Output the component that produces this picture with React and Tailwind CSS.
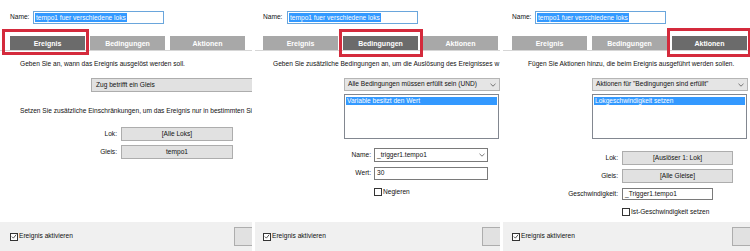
import React from "react";

// three cropped dialog windows side by side, each with its red tab highlight

function Check({ checked }) {
  return (
    <span className="w-[8px] h-[8px] border border-[#333] bg-white flex items-center justify-center shrink-0">
      {checked && (
        <svg width="7" height="7" viewBox="0 0 7 7">
          <path d="M1 3.6 L2.8 5.4 L6 1.4" fill="none" stroke="#222" strokeWidth="0.9" />
        </svg>
      )}
    </span>
  );
}

function Chevron() {
  return (
    <svg width="6" height="4" viewBox="0 0 6 4" className="shrink-0">
      <path d="M0.5 0.8 L3 3.2 L5.5 0.8" fill="none" stroke="#555" strokeWidth="0.8" />
    </svg>
  );
}

function NameRow({ pad, labelW }) {
  return (
    <div className={`flex items-center ${pad}`}>
      <span className={`${labelW}`}>Name:</span>
      <div className="w-[131px] h-[13px] border border-[#6aa6dc] bg-white flex items-center px-[1px]">
        <span className="bg-[#3399ff] text-white leading-[9px] px-[1px] whitespace-nowrap">tempo1 fuer verschiedene loks</span>
      </div>
    </div>
  );
}

function Tabs({ pad, active, box }) {
  const labels = ["Ereignis", "Bedingungen", "Aktionen"];
  return (
    <div className={`mt-[12px] flex gap-[5px] border-b border-[#d6d6d6] ${pad}`}>
      {labels.map((l, i) => (
        <div
          key={l}
          className={`relative w-[75px] h-[14px] shrink-0 flex items-center justify-center text-white font-bold text-[7px] ${
            i === active ? "bg-[#6b6b6b]" : "bg-[#a8a8a8]"
          }`}
        >
          {l}
          {i === active && <span className={`absolute border-[3px] border-[#d42a3c] ${box}`} />}
        </div>
      ))}
    </div>
  );
}

function Btn({ children, className }) {
  return (
    <div className={`h-[14px] bg-[#e1e1e1] border border-[#adadad] flex items-center whitespace-nowrap ${className}`}>{children}</div>
  );
}

function BottomBar({ pad }) {
  return (
    <div className={`h-[29px] bg-[#f0f0f0] flex items-center justify-between ${pad}`}>
      <div className="flex items-center gap-[1px]">
        <Check checked />
        <span>Ereignis aktivieren</span>
      </div>
      <div className="w-[22px] h-[19px] bg-[#e1e1e1] border border-[#adadad] -mr-[4px]" />
    </div>
  );
}

function Listbox({ item, className }) {
  return (
    <div className={`w-[155px] h-[45px] border border-[#828790] bg-white pt-[2px] px-[1px] ${className}`}>
      <div className="bg-[#3399ff] text-white leading-[8px] px-[1px]">{item}</div>
    </div>
  );
}

function Select({ children, className }) {
  return (
    <div className={`h-[13px] w-[156px] bg-[#e5e5e5] border border-[#b5b5b5] flex items-center justify-between px-[3px] ${className}`}>
      <span className="whitespace-nowrap">{children}</span>
      <Chevron />
    </div>
  );
}

function PanelEreignis() {
  return (
    <div className="w-[252px] h-[251px] flex flex-col overflow-hidden shrink-0">
      <div className="flex-1 flex flex-col pt-[11px]">
        <NameRow pad="pl-[10px]" labelW="w-[23px]" />
        <Tabs pad="pl-[10px]" active={0} box="-left-[8px] -right-[4px] -top-[7px] -bottom-[5px]" />
        <p className="mt-[8px] pl-[20px] leading-[9px] whitespace-nowrap overflow-hidden">
          Geben Sie an, wann das Ereignis ausgelöst werden soll.
        </p>
        <Btn className="mt-[10px] ml-[91px] w-[161px] h-[13px] px-[4px] border-r-0">Zug betrifft ein Gleis</Btn>
        <p className="mt-[14px] pl-[20px] leading-[9px] whitespace-nowrap overflow-hidden">
          Setzen Sie zusätzliche Einschränkungen, um das Ereignis nur in bestimmten Si
        </p>
        <div className="mt-[12px] flex items-center">
          <span className="w-[117px] text-right">Lok:</span>
          <Btn className="ml-[4px] w-[112px] justify-center">[Alle Loks]</Btn>
        </div>
        <div className="mt-[4px] flex items-center">
          <span className="w-[117px] text-right">Gleis:</span>
          <Btn className="ml-[4px] w-[112px] justify-center">tempo1</Btn>
        </div>
      </div>
      <BottomBar pad="pl-[10px]" />
    </div>
  );
}

function PanelBedingungen() {
  return (
    <div className="w-[245px] h-[251px] flex flex-col overflow-hidden shrink-0">
      <div className="flex-1 flex flex-col pt-[11px]">
        <NameRow pad="pl-[8px]" labelW="w-[24px]" />
        <Tabs pad="pl-[8px]" active={1} box="-left-[4px] -right-[5px] -top-[7px] -bottom-[7px]" />
        <p className="mt-[8px] pl-[18px] leading-[9px] whitespace-nowrap overflow-hidden">
          Geben Sie zusätzliche Bedingungen an, um die Auslösung des Ereignisses w
        </p>
        <Select className="mt-[10px] ml-[89px]">Alle Bedingungen müssen erfüllt sein (UND)</Select>
        <Listbox className="mt-[3px] ml-[89px]" item="Variable besitzt den Wert" />
        <div className="mt-[9px] flex items-center">
          <span className="w-[116px] text-right">Name:</span>
          <div className="ml-[3px] w-[114px] h-[14px] bg-white border border-[#7a7a7a] flex items-center justify-between px-[2px]">
            <span>_trigger1.tempo1</span>
            <Chevron />
          </div>
        </div>
        <div className="mt-[5px] flex items-center">
          <span className="w-[116px] text-right">Wert:</span>
          <div className="ml-[3px] w-[114px] h-[13px] bg-white border border-[#7a7a7a] flex items-center px-[2px]">30</div>
        </div>
        <div className="mt-[8px] ml-[119px] flex items-center gap-[1px]">
          <Check />
          <span>Negieren</span>
        </div>
      </div>
      <BottomBar pad="pl-[8px]" />
    </div>
  );
}

function PanelAktionen() {
  return (
    <div className="w-[247px] h-[251px] flex flex-col overflow-hidden shrink-0">
      <div className="flex-1 flex flex-col pt-[11px]">
        <NameRow pad="pl-[9px]" labelW="w-[23px]" />
        <Tabs pad="pl-[9px]" active={2} box="-left-[5px] -right-[4px] -top-[8px] -bottom-[7px]" />
        <p className="mt-[8px] pl-[25px] leading-[9px] whitespace-nowrap overflow-hidden">
          Fügen Sie Aktionen hinzu, die beim Ereignis ausgeführt werden sollen.
        </p>
        <Select className="mt-[10px] ml-[89px]">Aktionen für "Bedingungen sind erfüllt"</Select>
        <Listbox className="mt-[3px] ml-[89px]" item="Lokgeschwindigkeit setzen" />
        <div className="mt-[12px] flex items-center">
          <span className="w-[115px] text-right">Lok:</span>
          <Btn className="ml-[4px] w-[111px] h-[13px] justify-center">[Auslöser 1: Lok]</Btn>
        </div>
        <div className="mt-[4px] flex items-center">
          <span className="w-[115px] text-right">Gleis:</span>
          <Btn className="ml-[4px] w-[111px] h-[13px] justify-center">[Alle Gleise]</Btn>
        </div>
        <div className="mt-[5px] flex items-center">
          <span className="w-[115px] text-right">Geschwindigkeit:</span>
          <div className="ml-[4px] w-[91px] h-[12px] bg-white border border-[#7a7a7a] flex items-center px-[2px]">
            _Trigger1.tempo1
          </div>
        </div>
        <div className="mt-[8px] ml-[119px] flex items-center gap-[1px]">
          <Check />
          <span>Ist-Geschwindigkeit setzen</span>
        </div>
      </div>
      <BottomBar pad="pl-[9px]" />
    </div>
  );
}

export default function App() {
  return (
    <div className="w-[750px] h-[251px] bg-white flex overflow-hidden font-['Liberation_Sans',Arial,sans-serif] text-[6.6px] text-[#111] leading-none">
      <PanelEreignis />
      <div className="w-[3px] shrink-0" />
      <PanelBedingungen />
      <div className="w-[3px] shrink-0" />
      <PanelAktionen />
    </div>
  );
}
